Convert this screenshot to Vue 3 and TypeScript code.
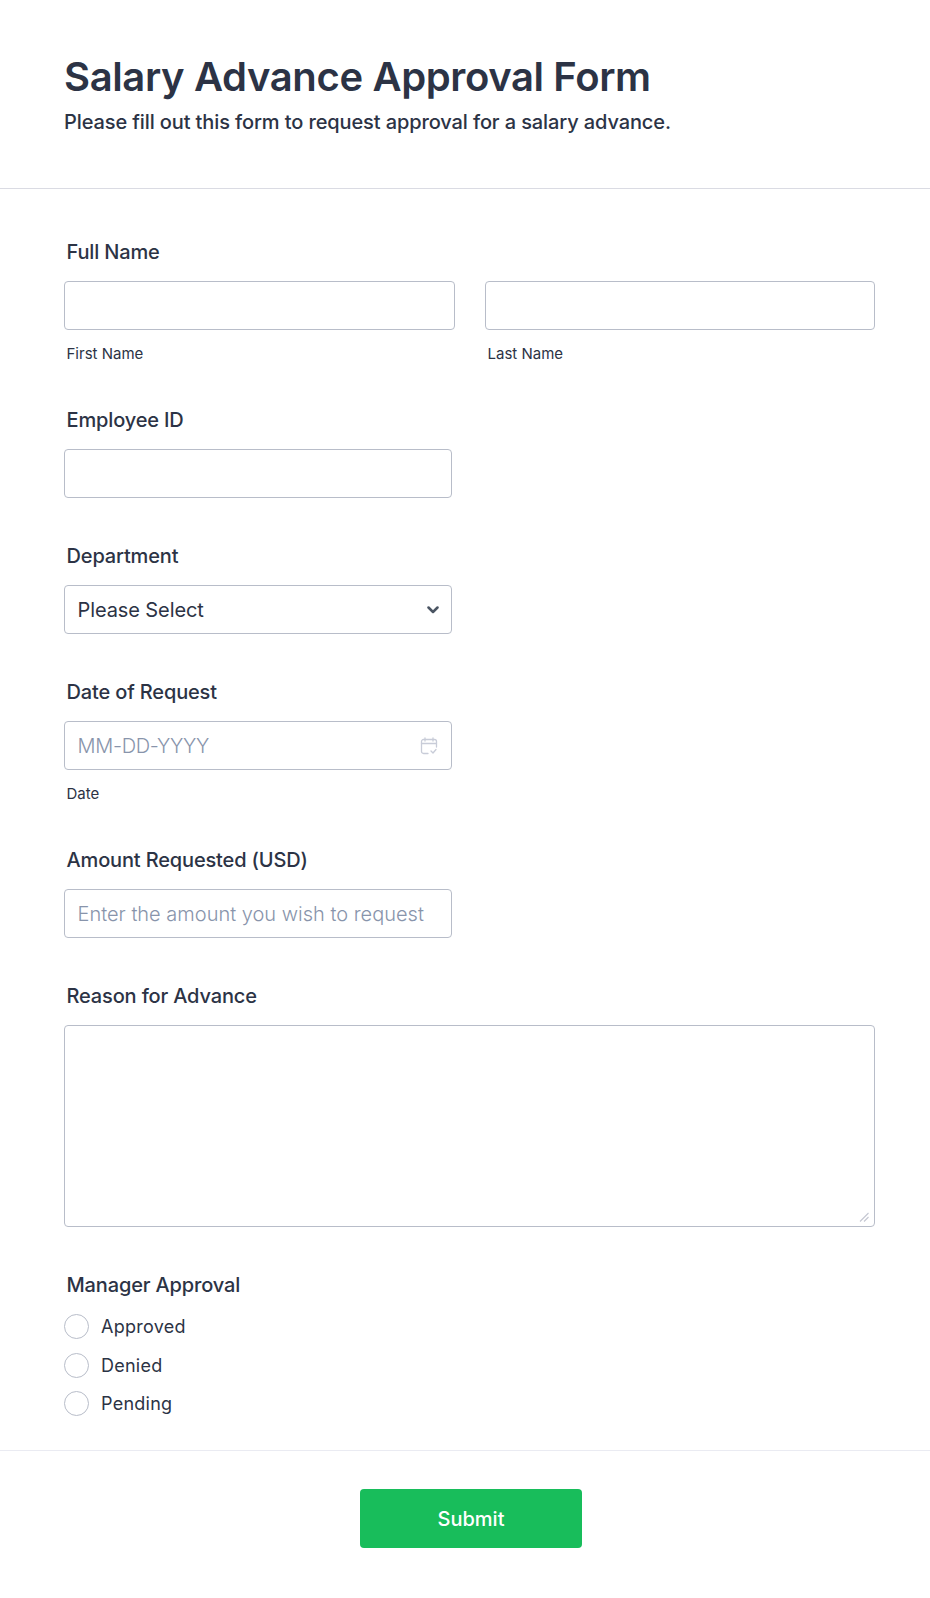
<script setup lang="ts">
const approvals: string[] = ['Approved', 'Denied', 'Pending']
</script>

<template>
  <form class="page" @submit.prevent>
    <header class="head">
      <h1 class="title">Salary Advance Approval Form</h1>
      <p class="subtitle">Please fill out this form to request approval for a salary advance.</p>
    </header>

    <div class="body">
      <section class="field wide">
        <div class="label">Full Name</div>
        <div class="name-row">
          <div class="name-col">
            <input class="control" type="text" />
            <div class="sub">First Name</div>
          </div>
          <div class="name-col">
            <input class="control" type="text" />
            <div class="sub">Last Name</div>
          </div>
        </div>
      </section>

      <section class="field">
        <div class="label">Employee ID</div>
        <input class="control half" type="text" />
      </section>

      <section class="field">
        <div class="label">Department</div>
        <div class="half wrap">
          <select class="control select">
            <option>Please Select</option>
          </select>
          <svg class="chev" width="12" height="8" viewBox="0 0 12 8" fill="none">
            <path d="M1.5 1.5 6 6l4.5-4.5" stroke="#4b5563" stroke-width="2.5" stroke-linecap="round" stroke-linejoin="round" />
          </svg>
        </div>
      </section>

      <section class="field">
        <div class="label">Date of Request</div>
        <div class="half wrap">
          <input class="control date" type="text" placeholder="MM-DD-YYYY" />
          <svg class="cal" width="18" height="18" viewBox="0 0 18 18" fill="none" stroke="#c8ccd8" stroke-width="1.3" stroke-linecap="round" stroke-linejoin="round">
            <path d="M8 16.5H3.5a2 2 0 0 1-2-2v-10a2 2 0 0 1 2-2h11a2 2 0 0 1 2 2V10" />
            <path d="M1.5 6.5h15M5 1v3M13 1v3" />
            <path d="m11 14 2 2 3-3.5" />
          </svg>
        </div>
        <div class="sub">Date</div>
      </section>

      <section class="field">
        <div class="label">Amount Requested (USD)</div>
        <input class="control half" type="text" placeholder="Enter the amount you wish to request" />
      </section>

      <section class="field">
        <div class="label">Reason for Advance</div>
        <div class="wrap">
          <textarea class="control area"></textarea>
          <svg class="grip" width="10" height="10" viewBox="0 0 10 10" fill="none" stroke="#c4c7d2" stroke-width="1.1">
            <path d="M1 9.5 9.5 1M5 9.5 9.5 5" />
          </svg>
        </div>
      </section>

      <section class="field">
        <div class="label">Manager Approval</div>
        <div class="radios">
          <label v-for="a in approvals" :key="a" class="radio">
            <span class="dot"></span>
            <span>{{ a }}</span>
          </label>
        </div>
      </section>
    </div>

    <footer class="foot">
      <button class="submit" type="submit">Submit</button>
    </footer>
  </form>
</template>

<style>
html, body { margin: 0; background: #fff; }
</style>

<style scoped>
.page {
  width: 930px;
  height: 1598px;
  box-sizing: border-box;
  background: #fff;
  color: #2c3345;
  font-family: Inter, "Liberation Sans", sans-serif;
  display: flex;
  flex-direction: column;
}
.head {
  height: 189px;
  box-sizing: border-box;
  padding: 53px 64px 0;
  border-bottom: 1px solid #dadbe3;
}
.title {
  margin: 0;
  font-size: 40px;
  line-height: 48px;
  font-weight: 600;
  letter-spacing: -0.37px;
}
.subtitle {
  margin: 6px 0 0;
  font-size: 20px;
  line-height: 30px;
  font-weight: 500;
  letter-spacing: -0.11px;
}
.body {
  padding: 49px 55px 0 64px;
  flex: 1;
  display: flex;
  flex-direction: column;
  gap: 44px;
}
.label {
  font-size: 20px;
  line-height: 28px;
  font-weight: 500;
  letter-spacing: -0.15px;
  padding-left: 2.5px;
  margin-bottom: 15px;
}
.name-row {
  display: grid;
  grid-template-columns: 391px 390px;
  column-gap: 30px;
}
.sub {
  font-size: 15px;
  line-height: 17px;
  padding-left: 2.5px;
  margin-top: 15px;
}
.control {
  display: block;
  width: 100%;
  height: 49px;
  box-sizing: border-box;
  border: 1px solid #b8bdc9;
  border-radius: 4px;
  background: #fff;
  padding: 0 12.5px;
  font-family: inherit;
  font-size: 20px;
  letter-spacing: -0.1px;
  color: #2c3345;
  outline: none;
  margin: 0;
}
.control::placeholder { color: #8894ab; opacity: 1; font-weight: 300; letter-spacing: 0; }
.date::placeholder { letter-spacing: -0.3px; }
.half { width: 388px; }
.wrap { position: relative; }
.select { appearance: none; -webkit-appearance: none; }
.chev { position: absolute; right: 13.5px; top: 21px; pointer-events: none; }
.cal { position: absolute; right: 14px; top: 16px; pointer-events: none; }
.area {
  height: 202px;
  padding: 10px 12px;
  resize: none;
}
.grip { position: absolute; right: 6px; bottom: 5px; pointer-events: none; }
.radios {
  display: flex;
  flex-direction: column;
  gap: 13.5px;
  margin-top: 1px;
}
.radio {
  display: flex;
  align-items: center;
  gap: 12px;
  font-size: 18px;
  line-height: 25px;
  letter-spacing: 0.25px;
}
.dot {
  width: 25px;
  height: 25px;
  box-sizing: border-box;
  border: 1.5px solid #b8bdc9;
  border-radius: 50%;
  background: #fff;
}
.foot {
  height: 148px;
  box-sizing: border-box;
  border-top: 1px solid #eaebf2;
  padding-top: 38px;
  display: flex;
  justify-content: center;
}
.submit {
  width: 222px;
  height: 59px;
  margin-left: 12px;
  border: 0;
  border-radius: 4px;
  background: #18bd5b;
  color: #fff;
  font-family: inherit;
  font-size: 20px;
  font-weight: 500;
}
</style>
